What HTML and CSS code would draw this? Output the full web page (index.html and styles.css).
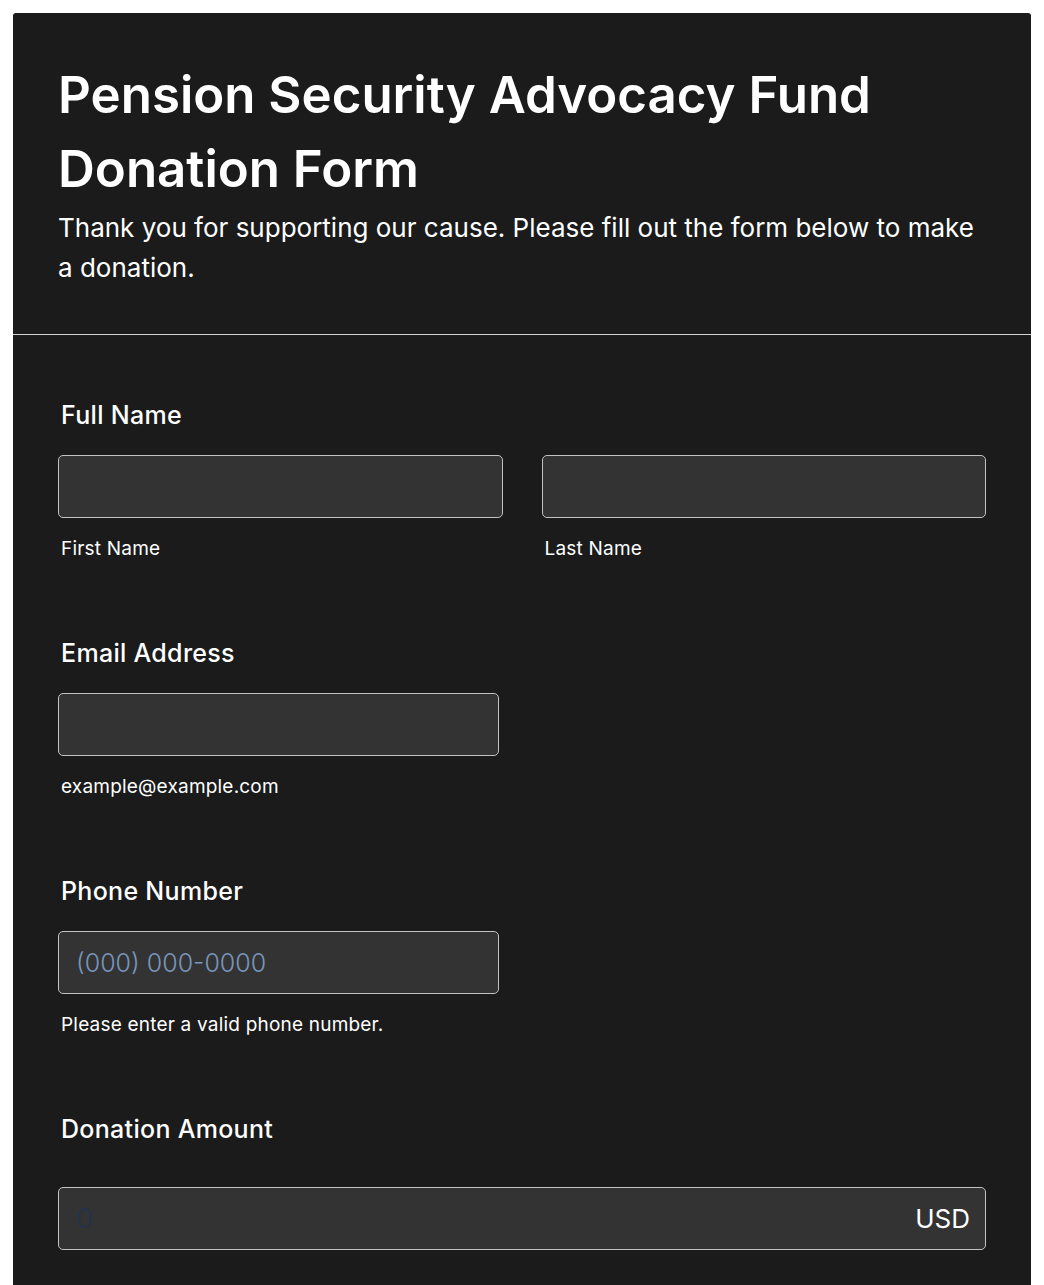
FILE: index.html
```html
<!DOCTYPE html>
<html lang="en">
<head>
  <meta charset="UTF-8">
  <meta name="viewport" content="width=device-width, initial-scale=1.0">
  <title>Donation Form</title>
  <link rel="stylesheet" href="styles.css">
</head>
<body>
  <div class="form-card">
    <div class="form-header">
      <h1 class="form-title">Pension Security Advocacy Fund Donation Form</h1>
      <p class="form-subtitle">Thank you for supporting our cause. Please fill out the form below to make a donation.</p>
    </div>

    <form class="form-body">
      <!-- Full name -->
      <div class="field">
        <label class="field-label">Full Name</label>
        <div class="name-row">
          <div class="name-col">
            <input class="text-input" type="text">
            <span class="sublabel">First Name</span>
          </div>
          <div class="name-col">
            <input class="text-input" type="text">
            <span class="sublabel">Last Name</span>
          </div>
        </div>
      </div>

      <!-- Email -->
      <div class="field">
        <label class="field-label">Email Address</label>
        <input class="text-input half" type="email">
        <span class="sublabel">example@example.com</span>
      </div>

      <!-- Phone -->
      <div class="field">
        <label class="field-label">Phone Number</label>
        <input class="text-input half" type="tel" placeholder="(000) 000-0000">
        <span class="sublabel">Please enter a valid phone number.</span>
      </div>

      <!-- Donation amount -->
      <div class="field">
        <label class="field-label amount-label">Donation Amount</label>
        <div class="amount-box">
          <input class="amount-input" type="text" placeholder="0">
          <span class="currency">USD</span>
        </div>
      </div>
    </form>
  </div>
</body>
</html>
```

FILE: styles.css
```css
/* General styles */
body {
  margin: 0;
  padding: 13px;
  background-color: #ffffff;
  font-family: 'Inter', 'Noto Sans', sans-serif;
  color: #ffffff;
}

.form-card {
  background-color: #1b1b1b;
  border-radius: 3px;
  overflow: hidden;
}

/* Header */
.form-header {
  padding: 45px 45px 46px;
  border-bottom: 1px solid #d4d4d4;
}

.form-title {
  margin: 0;
  font-size: 51px;
  line-height: 74px;
  font-weight: 600;
}

.form-subtitle {
  margin: 2px 0 0;
  font-size: 26px;
  line-height: 40px;
  font-weight: 400;
}

/* Form body */
.form-body {
  padding: 62px 45px 120px;
  display: flex;
  flex-direction: column;
  gap: 73px;
}

.field {
  display: flex;
  flex-direction: column;
  align-items: flex-start;
}

.field-label {
  padding-left: 3px;
  font-size: 25px;
  line-height: 36px;
  font-weight: 500;
  letter-spacing: 0.3px;
  margin-bottom: 22px;
}

.amount-label {
  margin-bottom: 40px;
}

.name-row {
  display: flex;
  gap: 39px;
  width: 100%;
}

.name-col {
  flex: 1;
  display: flex;
  flex-direction: column;
}

.text-input {
  box-sizing: border-box;
  width: 100%;
  height: 63px;
  background-color: #333333;
  border: 1.5px solid #c2c2c2;
  border-radius: 5px;
  padding: 0 17px;
  color: #ffffff;
  font-family: inherit;
  font-size: 25px;
}

.text-input.half {
  width: 441px;
}

.text-input::placeholder {
  color: #7895bb;
  font-weight: 300;
}

.sublabel {
  padding-left: 3px;
  margin-top: 17px;
  font-size: 19px;
  line-height: 27px;
  letter-spacing: 0.2px;
}

/* Amount with currency */
.amount-box {
  box-sizing: border-box;
  width: 100%;
  height: 63px;
  display: flex;
  align-items: center;
  background-color: #333333;
  border: 1.5px solid #c2c2c2;
  border-radius: 5px;
  padding: 0 15px 0 17px;
}

.amount-input {
  flex: 1;
  padding: 0;
  background: transparent;
  border: none;
  color: #ffffff;
  font-family: inherit;
  font-size: 27px;
}

.amount-input::placeholder {
  color: #22344d;
  font-weight: 300;
}

.currency {
  font-size: 26px;
}
```
